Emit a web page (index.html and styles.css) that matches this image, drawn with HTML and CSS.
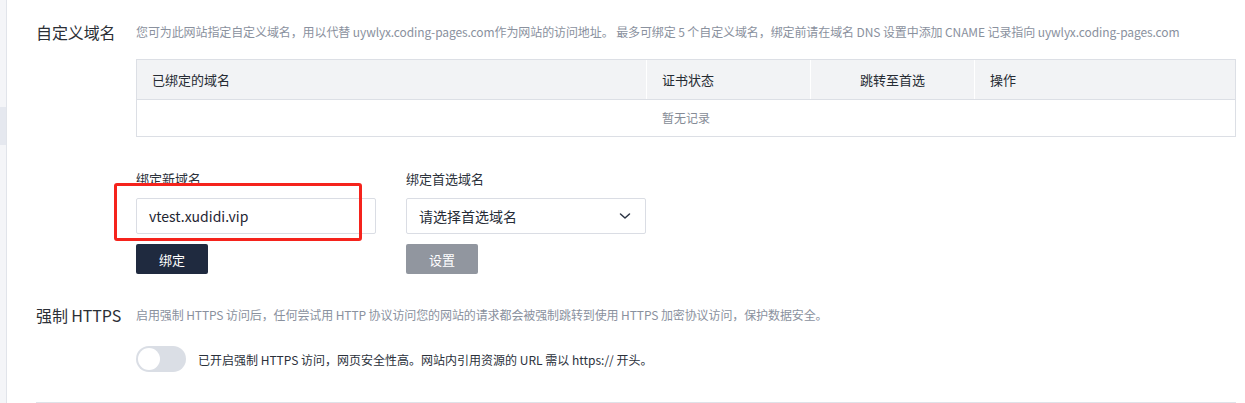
FILE: index.html
```html
<!DOCTYPE html>
<html lang="zh-CN">
<head>
<meta charset="utf-8">
<title>自定义域名</title>
<link rel="stylesheet" href="styles.css">
</head>
<body>
<div class="page">
  <aside class="side">
    <div class="side-mark"></div>
  </aside>
  <main class="main">
    <section class="section">
      <h2 class="sec-title">自定义域名</h2>
      <div class="sec-body">
        <p class="sec-desc">您可为此网站指定自定义域名，用以代替 uywlyx.coding-pages.com作为网站的访问地址。 最多可绑定 5 个自定义域名，绑定前请在域名 DNS 设置中添加 CNAME 记录指向 uywlyx.coding-pages.com</p>
        <div class="table">
          <div class="thead">
            <div class="th c1">已绑定的域名</div>
            <div class="th c2">证书状态</div>
            <div class="th c3">跳转至首选</div>
            <div class="th c4">操作</div>
          </div>
          <div class="empty">暂无记录</div>
        </div>
        <div class="forms">
          <div class="field">
            <label class="field-label">绑定新域名</label>
            <div class="input">vtest.xudidi.vip</div>
            <button class="btn btn-dark">绑定</button>
            <div class="highlight"></div>
          </div>
          <div class="field">
            <label class="field-label">绑定首选域名</label>
            <div class="input select">
              <span class="placeholder">请选择首选域名</span>
              <svg class="chev" width="12" height="8" viewBox="0 0 12 8"><path d="M1.5 2 L6 6 L10.5 2" fill="none" stroke="#2a3343" stroke-width="1.5" stroke-linecap="round" stroke-linejoin="round"/></svg>
            </div>
            <button class="btn btn-grey">设置</button>
          </div>
        </div>
      </div>
    </section>
    <section class="section https">
      <h2 class="sec-title">强制 HTTPS</h2>
      <div class="sec-body">
        <p class="sec-desc">启用强制 HTTPS 访问后，任何尝试用 HTTP 协议访问您的网站的请求都会被强制跳转到使用 HTTPS 加密协议访问，保护数据安全。</p>
        <div class="switch-row">
          <span class="switch"><span class="knob"></span></span>
          <span class="switch-text">已开启强制 HTTPS 访问，网页安全性高。网站内引用资源的 URL 需以 https:// 开头。</span>
        </div>
      </div>
    </section>
    <div class="divider"></div>
  </main>
</div>
</body>
</html>
```

FILE: styles.css
```css
* { box-sizing: border-box; }
html, body { margin: 0; padding: 0; background: #fff; }
body {
  font-family: "Noto Sans CJK SC", "Noto Sans", sans-serif;
  color: #2b313b;
  width: 1245px;
  height: 403px;
  overflow: hidden;
}
.page { display: flex; height: 403px; }
.side {
  width: 7px;
  background: #f4f5f8;
  border-right: 1px solid #e1e4ea;
  padding-top: 107px;
  flex: none;
}
.side-mark { height: 38px; background: #e5e8ef; }
.main { flex: 1; padding: 20px 10px 0 29px; }
.section { display: grid; grid-template-columns: 100px 1fr; }
.sec-title {
  margin: 0;
  font-size: 16px;
  font-weight: 400;
  line-height: 24px;
  color: #2b2f36;
  white-space: nowrap;
  letter-spacing: -0.1px;
}
.sec-desc {
  margin: 0;
  font-size: 12px;
  line-height: 24px;
  color: #8a919e;
  white-space: nowrap;
  letter-spacing: -0.1px;
}
.table {
  margin-top: 15px;
  border: 1px solid #dcdfe5;
  width: 1100px;
}
.thead {
  display: flex;
  background: #f2f3f5;
  border-bottom: 1px solid #dcdfe5;
  height: 40px;
}
.th {
  font-size: 13px;
  line-height: 39px;
  color: #262b33;
  padding-left: 15px;
}
.c1 { width: 509px; }
.c2 { width: 164px; border-left: 1px solid #fff; }
.c3 { width: 164px; border-left: 1px solid #fff; text-align: center; padding-left: 0; }
.c4 { flex: 1; border-left: 1px solid #fff; }
.empty {
  height: 36px;
  line-height: 36px;
  text-align: center;
  font-size: 12px;
  color: #858b96;
}
.forms { display: flex; gap: 30px; margin-top: 33px; }
.field { position: relative; display: flex; flex-direction: column; align-items: flex-start; width: 240px; }
.field-label { font-size: 13px; line-height: 18px; color: #2b313b; }
.input {
  margin-top: 10px;
  width: 240px;
  height: 36px;
  border: 1px solid #dadde4;
  border-radius: 2px;
  padding: 0 12px;
  font-size: 14px;
  line-height: 34px;
  color: #1f2633;
}
.select { display: flex; align-items: center; justify-content: space-between; padding-right: 14px; }
.placeholder { color: #262c36; }
.chev { display: block; }
.btn {
  margin-top: 10px;
  width: 72px;
  height: 30px;
  border: none;
  border-radius: 2px;
  font-family: inherit;
  font-size: 13px;
  color: #fff;
  padding: 0;
}
.btn-dark { background: #1f2a3f; }
.btn-grey { background: #91969f; }
.highlight {
  position: absolute;
  left: -22px;
  top: 13px;
  width: 248px;
  height: 58px;
  border: 3px solid #f5231c;
  border-radius: 3px;
}
.https { margin-top: 29px; }
.switch-row { display: flex; align-items: center; margin-top: 19px; }
.switch {
  width: 50px;
  height: 26px;
  border-radius: 13px;
  background: #dadee5;
  padding: 2px;
  display: flex;
}
.knob {
  width: 22px;
  height: 22px;
  border-radius: 50%;
  background: #fff;
}
.switch-text { margin-left: 12px; font-size: 12px; color: #2b313b; }
.divider { margin-top: 30px; height: 1px; background: #dfe2e8; }
```
